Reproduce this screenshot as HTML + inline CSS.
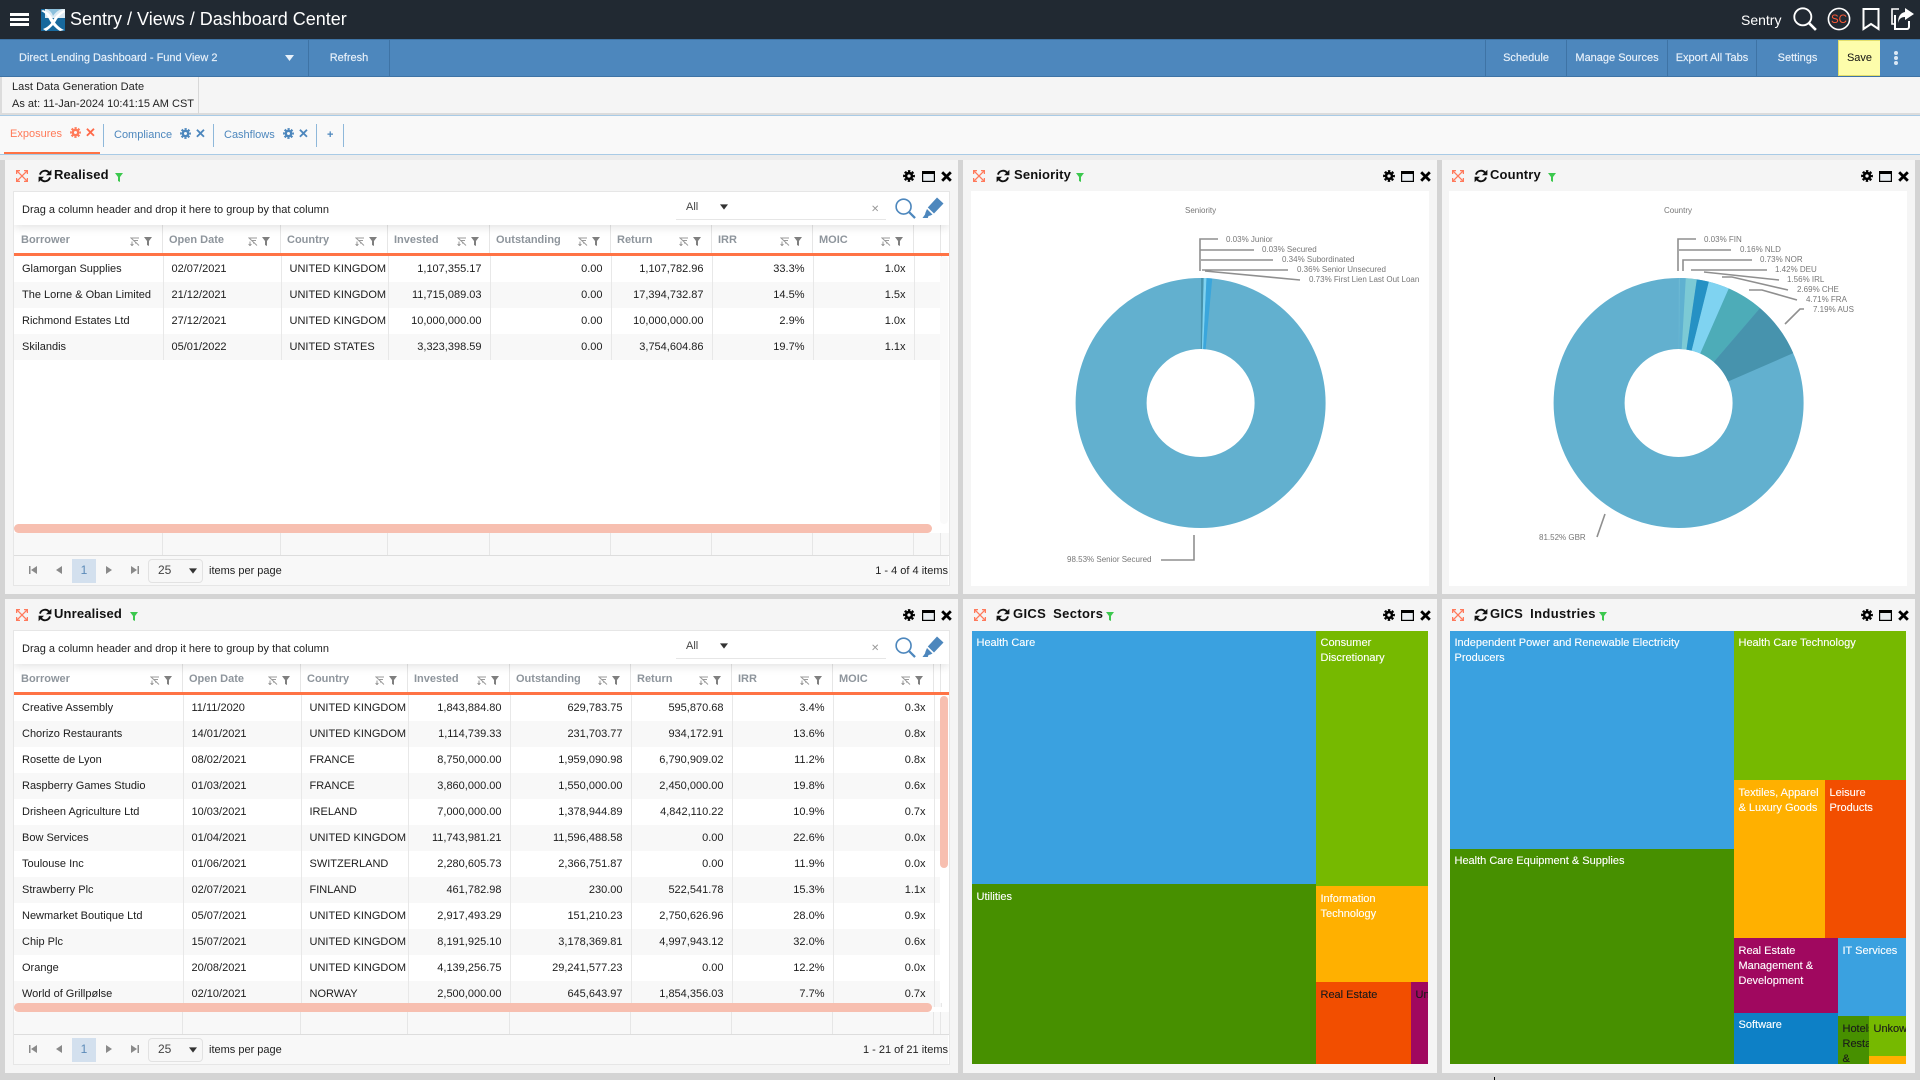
<!DOCTYPE html>
<html><head><meta charset="utf-8"><title>Sentry / Views / Dashboard Center</title>
<style>
*{box-sizing:border-box}
html,body{margin:0;padding:0;width:1920px;height:1080px;overflow:hidden;background:#d4d4d4;font-family:"Liberation Sans",sans-serif;font-size:11px;color:#222}
.a{position:absolute}
.t{position:absolute;white-space:nowrap;line-height:14px}
.tb{color:#e8f1fa;font-size:11px;text-align:center;line-height:36px;top:40px;height:36px;-webkit-text-stroke:.15px #e8f1fa}
.sep{position:absolute;top:40px;height:36px;width:1px;background:#3e73a5}
.tabsep{position:absolute;top:124px;height:23px;width:1px;background:#8fb8da}
.panel{position:absolute;background:#f5f5f5}
.white{position:absolute;background:#fff}
.title{position:absolute;font-weight:bold;font-size:13px;line-height:16px;color:#111;white-space:nowrap;letter-spacing:.15px}
.gics{letter-spacing:.35px;word-spacing:3px}
.grid{position:absolute;left:13px;width:937px;background:#fff;border:1px solid #e6e6e6;overflow:hidden}
.gb{position:absolute;left:0;top:0;width:935px;height:33px;background:#fff;box-shadow:0 3px 8px rgba(0,0,0,.1);z-index:3}
.h{position:absolute;left:0;top:33px;height:28px;width:927px;display:flex}
.h div{position:relative;border-right:1px solid #e6e6e6;font-weight:bold;color:#8e959c;padding-left:6px;line-height:30px;white-space:nowrap}
.h div:first-child{padding-left:7px}
.h svg{position:absolute;top:12px}
.ol{position:absolute;left:0;height:3px;width:935px;background:#ff7345;z-index:2}
table{position:absolute;left:0;border-collapse:collapse;table-layout:fixed;width:927px}
td{height:26px;padding:0 8px 0 8px;border-right:1px solid #e8e8e8;white-space:nowrap;overflow:hidden;color:#1c1c1c;line-height:26px;font-size:11px}
td.n{text-align:right}
tr:nth-child(even) td{background:#f8f8f8}
.fr{position:absolute;left:0;height:23px;width:935px;background:#f8f8f8;border-bottom:1px solid #ddd;display:flex}
.fr div{border-right:1px solid #e6e6e6;height:22px}
.pg{position:absolute;left:0;width:934px;height:29px;background:#f8f8f8}
.sel{position:absolute;left:134px;top:3px;width:55px;height:24px;border:1px solid #e2e2e2;border-radius:4px;background:#f7f7f7;padding-left:9px;line-height:20px;color:#444;font-size:12px}
.one{position:absolute;left:58px;top:3px;width:24px;height:24px;background:#d3e0ee;color:#5b8ab8;text-align:center;line-height:22px;font-size:12px}
.tm{position:absolute;overflow:hidden;color:#fff;font-size:11px;line-height:15px;padding:5px 4.5px 0 4.5px;-webkit-text-stroke:.12px currentColor}
.tm.k{color:#1a1a1a}
.tm.p6{padding-top:6px}
</style></head><body>
<svg width="0" height="0" style="position:absolute">
<symbol id="gear" viewBox="0 0 16 16"><circle cx="8" cy="8" r="3.9" fill="none" stroke="currentColor" stroke-width="3.4"/><circle cx="8" cy="8" r="6.6" fill="none" stroke="currentColor" stroke-width="2.6" stroke-dasharray="3.2 1.98" stroke-dashoffset="1.6"/></symbol>
<symbol id="win" viewBox="0 0 13 11"><rect x=".6" y=".6" width="11.8" height="9.8" fill="#e9edf1" stroke="#000" stroke-width="1.2"/><rect x="0" y="0" width="13" height="3" fill="#000"/></symbol>
<symbol id="x" viewBox="0 0 11 11"><path d="M1.2 1.2L9.8 9.8M9.8 1.2L1.2 9.8" fill="none" stroke="#000" stroke-width="2.8"/></symbol>
<symbol id="exp" viewBox="0 0 12 12"><path d="M.6 4V.6H4M8 .6h3.4V4M.6 8v3.4H4M11.4 8v3.4H8M1.2 1.2l9.6 9.6M10.8 1.2l-9.6 9.6" fill="none" stroke="#ff7a5c" stroke-width="1.3"/></symbol>
<symbol id="ref" viewBox="0 0 14 14"><path d="M2 5.6A5.2 5.2 0 0 1 11 3.6M12 8.4A5.2 5.2 0 0 1 3 10.4" fill="none" stroke="#111" stroke-width="1.9"/><path d="M13.4.8v5.4H8zM.6 13.2V7.8H6z" fill="#111"/></symbol>
<symbol id="fun" viewBox="0 0 8 9"><path d="M0 0H8L5 4V9L3 8V4Z" fill="currentColor"/></symbol>
<symbol id="so" viewBox="0 0 10 9"><path d="M1.5 1H9M3.5 3.5H8M5 6H7M.5 .5L9 8.5M2 4.5V8.5M.6 7L2 8.8 3.4 7" fill="none" stroke="#9a9a9a" stroke-width="1"/></symbol>
<symbol id="s1" viewBox="0 0 8 8"><path d="M0 0H1.5V8H0ZM8 0V8L2 4Z" fill="#8a8a8a"/></symbol>
<symbol id="s2" viewBox="0 0 8 8"><path d="M7 0V8L1 4Z" fill="#8a8a8a"/></symbol>
<symbol id="s3" viewBox="0 0 8 8"><path d="M1 0V8L7 4Z" fill="#8a8a8a"/></symbol>
<symbol id="s4" viewBox="0 0 8 8"><path d="M0 0V8L6 4ZM6.5 0H8V8H6.5Z" fill="#8a8a8a"/></symbol>
<symbol id="dn" viewBox="0 0 9 6"><path d="M0 0H9L4.5 6Z" fill="currentColor"/></symbol>
<symbol id="srch" viewBox="0 0 22 22"><circle cx="9" cy="9" r="7.8" fill="none" stroke="currentColor" stroke-width="1.7"/><path d="M14.8 14.8L21 21" stroke="currentColor" stroke-width="2.4" fill="none"/></symbol>
<symbol id="hl" viewBox="0 0 22 21"><path d="M15 0.5L21.5 6.5 12 16.5 5.8 10.5Z M5 12L10.5 17.5 8.5 18.5 6.5 19 5.8 21H0.5L3 17.5 3.5 15.5Z" fill="#4d87bd"/></symbol>
</svg>

<!-- top bar -->
<div class="a" style="left:0;top:0;width:1920px;height:39px;background:#212932"></div>
<div class="a" style="left:10px;top:13px;width:19px;height:3px;background:#fff"></div>
<div class="a" style="left:10px;top:18px;width:19px;height:3px;background:#fff"></div>
<div class="a" style="left:10px;top:23px;width:19px;height:3px;background:#fff"></div>
<svg class="a" style="left:41px;top:9px" width="24" height="22" viewBox="0 0 24 22"><rect width="24" height="22" fill="#17689c"/><path d="M4 0H24V9H13L4 9Z" fill="#dceaf3"/><path d="M2 1C8 3 10 7 12 10 14 14 17 18 23 21L19 22C14 19 11 15 9 12 7 8 5 4 0 2Z" fill="#fff"/><path d="M23 1C17 4 14 8 12 11 10 15 7 18 2 20L5 22C10 19 13 15 15 12 17 8 20 5 24 3Z" fill="#fff"/><path d="M5 0C9 1 11 4 12 7 14 4 17 1 21 0Z" fill="#8cc0dc"/></svg>
<div class="t" style="left:70px;top:8px;font-size:18px;line-height:22px;color:#fff">Sentry / Views / Dashboard Center</div>
<div class="t" style="left:1741px;top:12px;font-size:14px;line-height:16px;color:#fff">Sentry</div>
<svg class="a" style="left:1793px;top:7px;color:#fff" width="24" height="24"><use href="#srch"/></svg>
<svg class="a" style="left:1827px;top:7px" width="24" height="24" viewBox="0 0 24 24"><circle cx="12" cy="12" r="10.6" fill="none" stroke="#fff" stroke-width="1.6"/><text x="12" y="16" text-anchor="middle" font-size="11.5" font-family="Liberation Sans" fill="#ff5a36">SC</text></svg>
<svg class="a" style="left:1862px;top:8px" width="18" height="23" viewBox="0 0 18 23"><path d="M1.5 1H16.5V21L9 16 1.5 21Z" fill="none" stroke="#fff" stroke-width="2"/></svg>
<svg class="a" style="left:1890px;top:7px" width="24" height="24" viewBox="0 0 24 24"><path d="M9 2H2V17H5" fill="none" stroke="#fff" stroke-width="1.6"/><path d="M5 8V22H17C18 22 19 21 19 20V14" fill="none" stroke="#fff" stroke-width="2"/><path d="M15 1L24 7 15 13V10C11 10 9 12 8 16 8 10 10 6 15 5Z" fill="#fff"/></svg>

<!-- toolbar -->
<div class="a" style="left:0;top:39px;width:1920px;height:38px;background:#4d87bd;border-top:1px solid #3e73a5;border-bottom:1px solid #3e73a5"></div>
<div class="t" style="left:19px;top:51px;color:#e8f1fa;-webkit-text-stroke:.15px #e8f1fa">Direct Lending Dashboard - Fund View 2</div>
<svg class="a" style="left:285px;top:55px;color:#e8f1fa" width="9" height="6"><use href="#dn"/></svg>
<div class="sep" style="left:308px"></div><div class="sep" style="left:389px"></div>
<div class="t tb" style="left:309px;width:80px">Refresh</div>
<div class="sep" style="left:1485px"></div><div class="sep" style="left:1566px"></div><div class="sep" style="left:1667px"></div><div class="sep" style="left:1756px"></div>
<div class="t tb" style="left:1486px;width:80px">Schedule</div>
<div class="t tb" style="left:1567px;width:100px">Manage Sources</div>
<div class="t tb" style="left:1668px;width:88px">Export All Tabs</div>
<div class="t tb" style="left:1757px;width:81px">Settings</div>
<div class="a" style="left:1838px;top:40px;width:42px;height:36px;background:#fdfdab;border-top:1px solid #e3df6a;border-left:1px solid #e3df6a;border-bottom:1px solid #e3df6a;text-align:center;line-height:34px;color:#111;font-size:11px">Save</div>
<div class="a" style="left:1894px;top:51px;width:4px;height:4px;border-radius:2px;background:#dbe8f5"></div>
<div class="a" style="left:1894px;top:56px;width:4px;height:4px;border-radius:2px;background:#dbe8f5"></div>
<div class="a" style="left:1894px;top:61px;width:4px;height:4px;border-radius:2px;background:#dbe8f5"></div>

<!-- info row -->
<div class="a" style="left:0;top:77px;width:1920px;height:38px;background:#f5f5f5;border-bottom:2px solid #dcdcdc"></div>
<div class="a" style="left:198px;top:77px;width:1px;height:37px;background:#d8d8d8"></div>
<div class="a" style="left:0;top:77px;width:2px;height:37px;background:#dcdcdc"></div>
<div class="t" style="left:12px;top:80px;letter-spacing:.05px">Last Data Generation Date</div>
<div class="t" style="left:12px;top:96.5px">As at: 11-Jan-2024 10:41:15 AM CST</div>

<!-- tabs -->
<div class="a" style="left:0;top:115px;width:1920px;height:40px;background:#f9f9f9;border-top:1px solid #a9cbe6;border-bottom:1px solid #a9cbe6"></div>
<div class="a" style="left:0;top:155px;width:1920px;height:5px;background:#ececec"></div>
<div class="t" style="left:10px;top:127px;color:#ff7a59">Exposures</div>
<svg class="a" style="left:70px;top:127px;color:#ff7a59" width="11" height="11"><use href="#gear"/></svg>
<div class="t" style="left:85px;top:126px;color:#ff6a4a;font-weight:bold;font-size:13px">✕</div>
<div class="a" style="left:4px;top:152px;width:96px;height:2px;background:#ff7345"></div>
<div class="tabsep" style="left:103px"></div>
<div class="t" style="left:114px;top:128px;color:#4d87bd">Compliance</div>
<svg class="a" style="left:180px;top:128px;color:#4d87bd" width="11" height="11"><use href="#gear"/></svg>
<div class="t" style="left:195px;top:127px;color:#4d87bd;font-weight:bold;font-size:13px">✕</div>
<div class="tabsep" style="left:213px"></div>
<div class="t" style="left:224px;top:128px;color:#4d87bd">Cashflows</div>
<svg class="a" style="left:283px;top:128px;color:#4d87bd" width="11" height="11"><use href="#gear"/></svg>
<div class="t" style="left:298px;top:127px;color:#4d87bd;font-weight:bold;font-size:13px">✕</div>
<div class="tabsep" style="left:316px"></div>
<div class="t" style="left:327px;top:128px;color:#4d87bd;font-weight:bold">+</div>
<div class="tabsep" style="left:343px"></div>

<!-- panels -->
<div class="panel" style="left:5px;top:160px;width:953px;height:434px"></div>
<div class="panel" style="left:963px;top:160px;width:474px;height:434px"></div>
<div class="panel" style="left:1442px;top:160px;width:473px;height:434px"></div>
<div class="panel" style="left:5px;top:599px;width:953px;height:474px"></div>
<div class="panel" style="left:963px;top:599px;width:474px;height:474px"></div>
<div class="panel" style="left:1442px;top:599px;width:473px;height:474px"></div>
<div class="a" style="left:1494px;top:1077px;width:1px;height:3px;background:#000"></div>

<!-- panel heads: Realised -->
<svg class="a" style="left:16px;top:170px" width="12" height="12"><use href="#exp"/></svg>
<svg class="a" style="left:38px;top:169px" width="14" height="14"><use href="#ref"/></svg>
<div class="title" style="left:54px;top:167px">Realised</div>
<svg class="a" style="left:115px;top:173px;color:#3cc84e" width="8" height="9"><use href="#fun"/></svg>
<svg class="a" style="left:903px;top:170px;color:#000" width="12" height="12"><use href="#gear"/></svg>
<svg class="a" style="left:922px;top:171px" width="13" height="11"><use href="#win"/></svg>
<svg class="a" style="left:941px;top:171px" width="11" height="11"><use href="#x"/></svg>
<!-- Seniority -->
<svg class="a" style="left:973px;top:170px" width="12" height="12"><use href="#exp"/></svg>
<svg class="a" style="left:996px;top:169px" width="14" height="14"><use href="#ref"/></svg>
<div class="title" style="left:1014px;top:167px">Seniority</div>
<svg class="a" style="left:1076px;top:173px;color:#3cc84e" width="8" height="9"><use href="#fun"/></svg>
<svg class="a" style="left:1383px;top:170px;color:#000" width="12" height="12"><use href="#gear"/></svg>
<svg class="a" style="left:1401px;top:171px" width="13" height="11"><use href="#win"/></svg>
<svg class="a" style="left:1420px;top:171px" width="11" height="11"><use href="#x"/></svg>
<!-- Country -->
<svg class="a" style="left:1452px;top:170px" width="12" height="12"><use href="#exp"/></svg>
<svg class="a" style="left:1474px;top:169px" width="14" height="14"><use href="#ref"/></svg>
<div class="title" style="left:1490px;top:167px">Country</div>
<svg class="a" style="left:1548px;top:173px;color:#3cc84e" width="8" height="9"><use href="#fun"/></svg>
<svg class="a" style="left:1861px;top:170px;color:#000" width="12" height="12"><use href="#gear"/></svg>
<svg class="a" style="left:1879px;top:171px" width="13" height="11"><use href="#win"/></svg>
<svg class="a" style="left:1898px;top:171px" width="11" height="11"><use href="#x"/></svg>
<!-- Unrealised -->
<svg class="a" style="left:16px;top:609px" width="12" height="12"><use href="#exp"/></svg>
<svg class="a" style="left:38px;top:608px" width="14" height="14"><use href="#ref"/></svg>
<div class="title" style="left:54px;top:606px">Unrealised</div>
<svg class="a" style="left:130px;top:612px;color:#3cc84e" width="8" height="9"><use href="#fun"/></svg>
<svg class="a" style="left:903px;top:609px;color:#000" width="12" height="12"><use href="#gear"/></svg>
<svg class="a" style="left:922px;top:610px" width="13" height="11"><use href="#win"/></svg>
<svg class="a" style="left:941px;top:610px" width="11" height="11"><use href="#x"/></svg>
<!-- GICS Sectors -->
<svg class="a" style="left:974px;top:609px" width="12" height="12"><use href="#exp"/></svg>
<svg class="a" style="left:996px;top:608px" width="14" height="14"><use href="#ref"/></svg>
<div class="title gics" style="left:1013px;top:606px">GICS Sectors</div>
<svg class="a" style="left:1106px;top:612px;color:#3cc84e" width="8" height="9"><use href="#fun"/></svg>
<svg class="a" style="left:1383px;top:609px;color:#000" width="12" height="12"><use href="#gear"/></svg>
<svg class="a" style="left:1401px;top:610px" width="13" height="11"><use href="#win"/></svg>
<svg class="a" style="left:1420px;top:610px" width="11" height="11"><use href="#x"/></svg>
<!-- GICS Industries -->
<svg class="a" style="left:1452px;top:609px" width="12" height="12"><use href="#exp"/></svg>
<svg class="a" style="left:1474px;top:608px" width="14" height="14"><use href="#ref"/></svg>
<div class="title gics" style="left:1490px;top:606px">GICS Industries</div>
<svg class="a" style="left:1599px;top:612px;color:#3cc84e" width="8" height="9"><use href="#fun"/></svg>
<svg class="a" style="left:1861px;top:609px;color:#000" width="12" height="12"><use href="#gear"/></svg>
<svg class="a" style="left:1879px;top:610px" width="13" height="11"><use href="#win"/></svg>
<svg class="a" style="left:1898px;top:610px" width="11" height="11"><use href="#x"/></svg>

<!-- Realised grid -->
<div class="grid" style="top:191px;height:395px">
 <div class="gb"><div class="t" style="left:8px;top:11px">Drag a column header and drop it here to group by that column</div>
  <div class="t" style="left:672px;top:8px;color:#444">All</div>
  <svg class="a" style="left:706px;top:12px;color:#333" width="8" height="6"><use href="#dn"/></svg>
  <div class="t" style="left:857px;top:11px;color:#999;font-size:10px">✕</div>
  <div class="a" style="left:662px;top:27px;width:210px;height:1px;background:#e6e6e6"></div>
  <svg class="a" style="left:881px;top:6px;color:#4d87bd" width="21" height="21"><use href="#srch"/></svg>
  <svg class="a" style="left:908px;top:5px" width="22" height="21"><use href="#hl"/></svg>
 </div>
 <div class="h">
  <div style="width:149px">Borrower<svg style="left:116px" width="10" height="9"><use href="#so"/></svg><svg style="left:130px;color:#7f7f7f" width="8" height="9"><use href="#fun"/></svg></div>
  <div style="width:118px">Open Date<svg style="left:85px" width="10" height="9"><use href="#so"/></svg><svg style="left:99px;color:#7f7f7f" width="8" height="9"><use href="#fun"/></svg></div>
  <div style="width:107px">Country<svg style="left:74px" width="10" height="9"><use href="#so"/></svg><svg style="left:88px;color:#7f7f7f" width="8" height="9"><use href="#fun"/></svg></div>
  <div style="width:102px">Invested<svg style="left:69px" width="10" height="9"><use href="#so"/></svg><svg style="left:83px;color:#7f7f7f" width="8" height="9"><use href="#fun"/></svg></div>
  <div style="width:121px">Outstanding<svg style="left:88px" width="10" height="9"><use href="#so"/></svg><svg style="left:102px;color:#7f7f7f" width="8" height="9"><use href="#fun"/></svg></div>
  <div style="width:101px">Return<svg style="left:68px" width="10" height="9"><use href="#so"/></svg><svg style="left:82px;color:#7f7f7f" width="8" height="9"><use href="#fun"/></svg></div>
  <div style="width:101px">IRR<svg style="left:68px" width="10" height="9"><use href="#so"/></svg><svg style="left:82px;color:#7f7f7f" width="8" height="9"><use href="#fun"/></svg></div>
  <div style="width:101px">MOIC<svg style="left:68px" width="10" height="9"><use href="#so"/></svg><svg style="left:82px;color:#7f7f7f" width="8" height="9"><use href="#fun"/></svg></div>
  <div style="width:27px"></div>
 </div>
 <div class="ol" style="top:61px"></div>
 <table style="top:64px"><colgroup><col style="width:149px"><col style="width:118px"><col style="width:107px"><col style="width:102px"><col style="width:121px"><col style="width:101px"><col style="width:101px"><col style="width:101px"><col style="width:27px"></colgroup>
 <tr><td>Glamorgan Supplies</td><td>02/07/2021</td><td>UNITED KINGDOM</td><td class="n">1,107,355.17</td><td class="n">0.00</td><td class="n">1,107,782.96</td><td class="n">33.3%</td><td class="n">1.0x</td><td></td></tr>
 <tr><td>The Lorne &amp; Oban Limited</td><td>21/12/2021</td><td>UNITED KINGDOM</td><td class="n">11,715,089.03</td><td class="n">0.00</td><td class="n">17,394,732.87</td><td class="n">14.5%</td><td class="n">1.5x</td><td></td></tr>
 <tr><td>Richmond Estates Ltd</td><td>27/12/2021</td><td>UNITED KINGDOM</td><td class="n">10,000,000.00</td><td class="n">0.00</td><td class="n">10,000,000.00</td><td class="n">2.9%</td><td class="n">1.0x</td><td></td></tr>
 <tr><td>Skilandis</td><td>05/01/2022</td><td>UNITED STATES</td><td class="n">3,323,398.59</td><td class="n">0.00</td><td class="n">3,754,604.86</td><td class="n">19.7%</td><td class="n">1.1x</td><td></td></tr>
 </table>
 <div class="a" style="left:926px;top:64px;width:8px;height:268px;background:#fafafa;border-radius:4px"></div>
 <div class="a" style="left:0;top:332px;width:918px;height:9px;background:#f7bfb0;border-radius:5px"></div>
 <div class="fr" style="top:341px"><div style="width:149px"></div><div style="width:118px"></div><div style="width:107px"></div><div style="width:102px"></div><div style="width:121px"></div><div style="width:101px"></div><div style="width:101px"></div><div style="width:101px"></div><div style="width:27px"></div></div>
 <div class="pg" style="top:364px">
  <svg class="a" style="left:15px;top:10px" width="8" height="8"><use href="#s1"/></svg>
  <svg class="a" style="left:41px;top:10px" width="8" height="8"><use href="#s2"/></svg>
  <div class="one">1</div>
  <svg class="a" style="left:91px;top:10px" width="8" height="8"><use href="#s3"/></svg>
  <svg class="a" style="left:117px;top:10px" width="8" height="8"><use href="#s4"/></svg>
  <div class="sel">25<svg class="a" style="left:40px;top:8px;color:#333" width="8" height="6"><use href="#dn"/></svg></div>
  <div class="t" style="left:195px;top:8px">items per page</div>
  <div class="t" style="right:0;top:8px">1 - 4 of 4 items</div>
 </div>
</div>

<!-- Unrealised grid -->
<div class="grid" style="top:630px;height:435px">
 <div class="gb"><div class="t" style="left:8px;top:11px">Drag a column header and drop it here to group by that column</div>
  <div class="t" style="left:672px;top:8px;color:#444">All</div>
  <svg class="a" style="left:706px;top:12px;color:#333" width="8" height="6"><use href="#dn"/></svg>
  <div class="t" style="left:857px;top:11px;color:#999;font-size:10px">✕</div>
  <div class="a" style="left:662px;top:27px;width:210px;height:1px;background:#e6e6e6"></div>
  <svg class="a" style="left:881px;top:6px;color:#4d87bd" width="21" height="21"><use href="#srch"/></svg>
  <svg class="a" style="left:908px;top:5px" width="22" height="21"><use href="#hl"/></svg>
 </div>
 <div class="h">
  <div style="width:169px">Borrower<svg style="left:136px" width="10" height="9"><use href="#so"/></svg><svg style="left:150px;color:#7f7f7f" width="8" height="9"><use href="#fun"/></svg></div>
  <div style="width:118px">Open Date<svg style="left:85px" width="10" height="9"><use href="#so"/></svg><svg style="left:99px;color:#7f7f7f" width="8" height="9"><use href="#fun"/></svg></div>
  <div style="width:107px">Country<svg style="left:74px" width="10" height="9"><use href="#so"/></svg><svg style="left:88px;color:#7f7f7f" width="8" height="9"><use href="#fun"/></svg></div>
  <div style="width:102px">Invested<svg style="left:69px" width="10" height="9"><use href="#so"/></svg><svg style="left:83px;color:#7f7f7f" width="8" height="9"><use href="#fun"/></svg></div>
  <div style="width:121px">Outstanding<svg style="left:88px" width="10" height="9"><use href="#so"/></svg><svg style="left:102px;color:#7f7f7f" width="8" height="9"><use href="#fun"/></svg></div>
  <div style="width:101px">Return<svg style="left:68px" width="10" height="9"><use href="#so"/></svg><svg style="left:82px;color:#7f7f7f" width="8" height="9"><use href="#fun"/></svg></div>
  <div style="width:101px">IRR<svg style="left:68px" width="10" height="9"><use href="#so"/></svg><svg style="left:82px;color:#7f7f7f" width="8" height="9"><use href="#fun"/></svg></div>
  <div style="width:101px">MOIC<svg style="left:68px" width="10" height="9"><use href="#so"/></svg><svg style="left:82px;color:#7f7f7f" width="8" height="9"><use href="#fun"/></svg></div>
  <div style="width:7px"></div>
 </div>
 <div class="ol" style="top:61px"></div>
 <table style="top:64px"><colgroup><col style="width:169px"><col style="width:118px"><col style="width:107px"><col style="width:102px"><col style="width:121px"><col style="width:101px"><col style="width:101px"><col style="width:101px"><col style="width:7px"></colgroup>
 <tr><td>Creative Assembly</td><td>11/11/2020</td><td>UNITED KINGDOM</td><td class="n">1,843,884.80</td><td class="n">629,783.75</td><td class="n">595,870.68</td><td class="n">3.4%</td><td class="n">0.3x</td><td></td></tr>
 <tr><td>Chorizo Restaurants</td><td>14/01/2021</td><td>UNITED KINGDOM</td><td class="n">1,114,739.33</td><td class="n">231,703.77</td><td class="n">934,172.91</td><td class="n">13.6%</td><td class="n">0.8x</td><td></td></tr>
 <tr><td>Rosette de Lyon</td><td>08/02/2021</td><td>FRANCE</td><td class="n">8,750,000.00</td><td class="n">1,959,090.98</td><td class="n">6,790,909.02</td><td class="n">11.2%</td><td class="n">0.8x</td><td></td></tr>
 <tr><td>Raspberry Games Studio</td><td>01/03/2021</td><td>FRANCE</td><td class="n">3,860,000.00</td><td class="n">1,550,000.00</td><td class="n">2,450,000.00</td><td class="n">19.8%</td><td class="n">0.6x</td><td></td></tr>
 <tr><td>Drisheen Agriculture Ltd</td><td>10/03/2021</td><td>IRELAND</td><td class="n">7,000,000.00</td><td class="n">1,378,944.89</td><td class="n">4,842,110.22</td><td class="n">10.9%</td><td class="n">0.7x</td><td></td></tr>
 <tr><td>Bow Services</td><td>01/04/2021</td><td>UNITED KINGDOM</td><td class="n">11,743,981.21</td><td class="n">11,596,488.58</td><td class="n">0.00</td><td class="n">22.6%</td><td class="n">0.0x</td><td></td></tr>
 <tr><td>Toulouse Inc</td><td>01/06/2021</td><td>SWITZERLAND</td><td class="n">2,280,605.73</td><td class="n">2,366,751.87</td><td class="n">0.00</td><td class="n">11.9%</td><td class="n">0.0x</td><td></td></tr>
 <tr><td>Strawberry Plc</td><td>02/07/2021</td><td>FINLAND</td><td class="n">461,782.98</td><td class="n">230.00</td><td class="n">522,541.78</td><td class="n">15.3%</td><td class="n">1.1x</td><td></td></tr>
 <tr><td>Newmarket Boutique Ltd</td><td>05/07/2021</td><td>UNITED KINGDOM</td><td class="n">2,917,493.29</td><td class="n">151,210.23</td><td class="n">2,750,626.96</td><td class="n">28.0%</td><td class="n">0.9x</td><td></td></tr>
 <tr><td>Chip Plc</td><td>15/07/2021</td><td>UNITED KINGDOM</td><td class="n">8,191,925.10</td><td class="n">3,178,369.81</td><td class="n">4,997,943.12</td><td class="n">32.0%</td><td class="n">0.6x</td><td></td></tr>
 <tr><td>Orange</td><td>20/08/2021</td><td>UNITED KINGDOM</td><td class="n">4,139,256.75</td><td class="n">29,241,577.23</td><td class="n">0.00</td><td class="n">12.2%</td><td class="n">0.0x</td><td></td></tr>
 <tr><td>World of Grillpølse</td><td>02/10/2021</td><td>NORWAY</td><td class="n">2,500,000.00</td><td class="n">645,643.97</td><td class="n">1,854,356.03</td><td class="n">7.7%</td><td class="n">0.7x</td><td></td></tr>
 </table>
 <div class="a" style="left:926px;top:64px;width:9px;height:308px;background:#fff;z-index:1"></div>
 <div class="a" style="left:926px;top:65px;width:8px;height:172px;background:#f7bfb0;border-radius:4px;z-index:1"></div>
 <div class="a" style="left:0;top:372px;width:918px;height:9px;background:#f7bfb0;border-radius:5px;z-index:1"></div>
 <div class="a" style="left:0;top:381px;width:935px;height:23px;background:#f8f8f8;z-index:1"></div>
 <div class="fr" style="top:381px;z-index:1"><div style="width:169px"></div><div style="width:118px"></div><div style="width:107px"></div><div style="width:102px"></div><div style="width:121px"></div><div style="width:101px"></div><div style="width:101px"></div><div style="width:101px"></div><div style="width:7px"></div></div>
 <div class="pg" style="top:404px;z-index:1">
  <svg class="a" style="left:15px;top:10px" width="8" height="8"><use href="#s1"/></svg>
  <svg class="a" style="left:41px;top:10px" width="8" height="8"><use href="#s2"/></svg>
  <div class="one">1</div>
  <svg class="a" style="left:91px;top:10px" width="8" height="8"><use href="#s3"/></svg>
  <svg class="a" style="left:117px;top:10px" width="8" height="8"><use href="#s4"/></svg>
  <div class="sel">25<svg class="a" style="left:40px;top:8px;color:#333" width="8" height="6"><use href="#dn"/></svg></div>
  <div class="t" style="left:195px;top:8px">items per page</div>
  <div class="t" style="right:0;top:8px">1 - 21 of 21 items</div>
 </div>
</div>

<!-- Seniority chart -->
<div class="white" style="left:971px;top:191px;width:458px;height:395px"></div>
<svg class="a" style="left:971px;top:191px" width="458" height="395" viewBox="971 191 458 395" font-family="Liberation Sans" font-size="8" fill="#777">
 <g transform="translate(.6 0)"><g transform="rotate(-90 1200 403)" fill="none" stroke-width="71">
  <circle cx="1200" cy="403" r="89.5" stroke="#62b0cf"/>
  <circle cx="1200" cy="403" r="89.5" pathLength="100" stroke="#4793ad" stroke-dasharray="0.34 100" stroke-dashoffset="-0.06"/>
  <circle cx="1200" cy="403" r="89.5" pathLength="100" stroke="#7fd3f1" stroke-dasharray="0.36 100" stroke-dashoffset="-0.40"/>
  <circle cx="1200" cy="403" r="89.5" pathLength="100" stroke="#3aa6dc" stroke-dasharray="0.73 100" stroke-dashoffset="-0.76"/>
 </g></g>
 <g fill="none" stroke="#8f8f8f" stroke-width="1.6" style="filter:blur(.3px)">
  <path d="M1218 239H1200V271M1200 250H1254M1201 260H1273M1202 270H1288M1205 271L1300 280"/>
  <path d="M1194 535V560H1161"/>
 </g>
 <g style="filter:blur(.3px)">
  <text x="1185" y="213">Seniority</text>
  <text x="1226" y="242">0.03% Junior</text>
  <text x="1262" y="252">0.03% Secured</text>
  <text x="1282" y="262">0.34% Subordinated</text>
  <text x="1297" y="272">0.36% Senior Unsecured</text>
  <text x="1309" y="282">0.73% First Lien Last Out Loan</text>
  <text x="1067" y="562">98.53% Senior Secured</text>
 </g>
</svg>

<!-- Country chart -->
<div class="white" style="left:1449px;top:191px;width:458px;height:395px"></div>
<svg class="a" style="left:1449px;top:191px" width="458" height="395" viewBox="1449 191 458 395" font-family="Liberation Sans" font-size="8" fill="#777">
 <g transform="translate(.6 0)"><g transform="rotate(-90 1678 403)" fill="none" stroke-width="71">
  <circle cx="1678" cy="403" r="89.5" stroke="#62b0cf"/>
  <circle cx="1678" cy="403" r="89.5" pathLength="100" stroke="#6db9d4" stroke-dasharray="0.16 100" stroke-dashoffset="-0.03"/>
  <circle cx="1678" cy="403" r="89.5" pathLength="100" stroke="#5fb1d1" stroke-dasharray="0.73 100" stroke-dashoffset="-0.19"/>
  <circle cx="1678" cy="403" r="89.5" pathLength="100" stroke="#7ccad5" stroke-dasharray="1.42 100" stroke-dashoffset="-0.92"/>
  <circle cx="1678" cy="403" r="89.5" pathLength="100" stroke="#2591c4" stroke-dasharray="1.56 100" stroke-dashoffset="-2.34"/>
  <circle cx="1678" cy="403" r="89.5" pathLength="100" stroke="#7fd3f1" stroke-dasharray="2.69 100" stroke-dashoffset="-3.9"/>
  <circle cx="1678" cy="403" r="89.5" pathLength="100" stroke="#4dacb8" stroke-dasharray="4.71 100" stroke-dashoffset="-6.59"/>
  <circle cx="1678" cy="403" r="89.5" pathLength="100" stroke="#4793ad" stroke-dasharray="7.19 100" stroke-dashoffset="-11.3"/>
 </g></g>
 <g fill="none" stroke="#8f8f8f" stroke-width="1.6" style="filter:blur(.3px)">
  <path d="M1696 239H1678V271M1679 250H1731M1752 260H1683V271M1691 270H1767M1704 272L1779 280M1722 277H1732L1788 290M1749 290H1762L1797 300M1804 309H1800L1785 324M1597 537L1605 514"/>
 </g>
 <g style="filter:blur(.3px)">
  <text x="1664" y="213">Country</text>
  <text x="1704" y="242">0.03% FIN</text>
  <text x="1740" y="252">0.16% NLD</text>
  <text x="1760" y="262">0.73% NOR</text>
  <text x="1775" y="272">1.42% DEU</text>
  <text x="1787" y="282">1.56% IRL</text>
  <text x="1797" y="292">2.69% CHE</text>
  <text x="1806" y="302">4.71% FRA</text>
  <text x="1813" y="312">7.19% AUS</text>
  <text x="1539" y="540">81.52% GBR</text>
 </g>
</svg>

<!-- Treemap sectors -->
<div class="tm" style="left:972px;top:631px;width:344px;height:253px;background:#3aa1e0">Health Care</div>
<div class="tm p6" style="left:972px;top:884px;width:344px;height:180px;background:#479000">Utilities</div>
<div class="tm" style="left:1316px;top:631px;width:112px;height:255px;background:#76b900">Consumer Discretionary</div>
<div class="tm p6" style="left:1316px;top:886px;width:112px;height:96px;background:#ffb000">Information Technology</div>
<div class="tm k p6" style="left:1316px;top:982px;width:95px;height:82px;background:#f24e00">Real Estate</div>
<div class="tm k p6" style="left:1411px;top:982px;width:17px;height:82px;background:#a0085f">Unknown</div>

<!-- Treemap industries -->
<div class="tm" style="left:1450px;top:631px;width:284px;height:218px;background:#3aa1e0">Independent Power and Renewable Electricity Producers</div>
<div class="tm" style="left:1450px;top:849px;width:284px;height:215px;background:#479000">Health Care Equipment &amp; Supplies</div>
<div class="tm" style="left:1734px;top:631px;width:172px;height:149px;background:#76b900">Health Care Technology</div>
<div class="tm p6" style="left:1734px;top:780px;width:91px;height:158px;background:#ffb000">Textiles, Apparel &amp; Luxury Goods</div>
<div class="tm p6" style="left:1825px;top:780px;width:81px;height:158px;background:#f24e00">Leisure Products</div>
<div class="tm p6" style="left:1734px;top:938px;width:104px;height:75px;background:#a0085f">Real Estate Management &amp; Development</div>
<div class="tm p6" style="left:1838px;top:938px;width:68px;height:78px;background:#3aa1e0">IT Services</div>
<div class="tm" style="left:1734px;top:1013px;width:104px;height:51px;background:#0d80c6">Software</div>
<div class="tm k p6" style="left:1838px;top:1016px;width:31px;height:48px;background:#479000;white-space:normal">Hotels Restaurants &amp; Leisure</div>
<div class="tm k p6" style="left:1869px;top:1016px;width:37px;height:40px;background:#76b900;white-space:nowrap">Unkown</div>
<div class="a" style="left:1869px;top:1056px;width:37px;height:8px;background:#ffb000"></div>
</body></html>
